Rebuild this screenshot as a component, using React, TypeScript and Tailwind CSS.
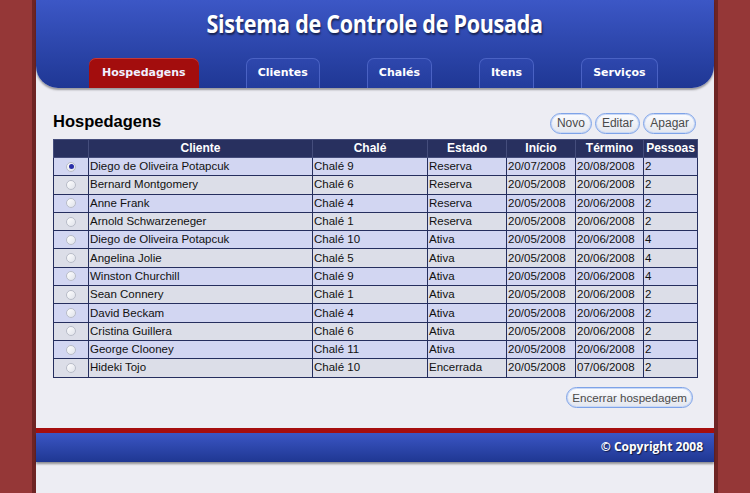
import React from "react";

const rows = [
  ["Diego de Oliveira Potapcuk", "Chalé 9", "Reserva", "20/07/2008", "20/08/2008", "2"],
  ["Bernard Montgomery", "Chalé 6", "Reserva", "20/05/2008", "20/06/2008", "2"],
  ["Anne Frank", "Chalé 4", "Reserva", "20/05/2008", "20/06/2008", "2"],
  ["Arnold Schwarzeneger", "Chalé 1", "Reserva", "20/05/2008", "20/06/2008", "2"],
  ["Diego de Oliveira Potapcuk", "Chalé 10", "Ativa", "20/05/2008", "20/06/2008", "4"],
  ["Angelina Jolie", "Chalé 5", "Ativa", "20/05/2008", "20/06/2008", "4"],
  ["Winston Churchill", "Chalé 9", "Ativa", "20/05/2008", "20/06/2008", "4"],
  ["Sean Connery", "Chalé 1", "Ativa", "20/05/2008", "20/06/2008", "2"],
  ["David Beckam", "Chalé 4", "Ativa", "20/05/2008", "20/06/2008", "2"],
  ["Cristina Guillera", "Chalé 6", "Ativa", "20/05/2008", "20/06/2008", "2"],
  ["George Clooney", "Chalé 11", "Ativa", "20/05/2008", "20/06/2008", "2"],
  ["Hideki Tojo", "Chalé 10", "Encerrada", "20/05/2008", "07/06/2008", "2"],
];

const tabs = ["Hospedagens", "Clientes", "Chalés", "Itens", "Serviços"];

function Btn({ children, small }: { children: React.ReactNode; small?: boolean }) {
  return (
    <button
      className={`box-border block h-[21px] rounded-full border border-[#7ea3e8] bg-gradient-to-b from-[#fbfcff] to-[#e3e6ee] leading-[19px] text-[#4a4a4a] shadow-[inset_0_0_0_1px_#c9d8f5] [font-family:'Liberation_Sans',Arial,sans-serif] ${
        small ? "px-[5px] text-[11.6px]" : "px-[6px] text-[12px]"
      }`}
    >
      {children}
    </button>
  );
}

function Radio({ checked }: { checked?: boolean }) {
  return (
    <span className="mx-auto flex h-[10px] w-[10px] items-center justify-center rounded-full border border-[#b8bcc8] bg-gradient-to-br from-[#ffffff] to-[#dfe2ea]">
      {checked && <span className="h-[5px] w-[5px] rounded-full bg-[#2a2ea8]" />}
    </span>
  );
}

export default function App() {
  return (
    <div className="flex h-[493px] w-[750px] justify-center overflow-hidden bg-[#953737]">
      <div className="flex w-[686px] justify-center bg-gradient-to-r from-[#6e2424] via-transparent to-[#6e2424]">
        <div className="flex w-[678px] flex-col bg-[#ededf3]">
          {/* Header */}
          <div className="relative rounded-b-[22px] shadow-[0_2px_2px_rgba(0,0,0,0.35)]">
            <div className="flex h-[88px] flex-col items-center rounded-b-[22px] bg-gradient-to-b from-[#3c57c6] to-[#1f3794]">
              <h1 className="mt-[6px] scale-x-[0.86] text-[25px] font-bold leading-[34px] tracking-[-0.3px] text-white [font-family:'Open_Sans',sans-serif] [text-shadow:1px_2px_2px_rgba(0,0,0,0.55)]">
                Sistema de Controle de Pousada
              </h1>
              <div className="mt-auto flex gap-[47px] self-start pl-[53px]">
                {tabs.map((t, i) => (
                  <div
                    key={t}
                    className={
                      i === 0
                        ? "flex h-[30px] items-center rounded-t-[7px] bg-[#a30d0d] px-[13px] text-[11px] font-bold text-[#f0f0ff] [font-family:'DejaVu_Sans',Verdana,sans-serif] shadow-[inset_0_1px_0_#c23a3a]"
                        : "flex h-[30px] items-center rounded-t-[7px] border border-b-0 border-[#4a62c4] bg-gradient-to-b from-[#2e47ad] to-[#233c9c] px-[11px] text-[11px] font-bold text-white [font-family:'DejaVu_Sans',Verdana,sans-serif]"
                    }
                  >
                    {t}
                  </div>
                ))}
              </div>
            </div>
          </div>

          {/* Content */}
          <div className="flex flex-col px-[17px] pt-[25px]">
            <div className="flex items-start justify-between">
              <h2 className="-mt-[1px] text-[16.5px] font-bold leading-[18px] text-black [font-family:'Liberation_Sans',Arial,sans-serif]">
                Hospedagens
              </h2>
              <div className="mr-[1px] flex gap-[3px]">
                <Btn>Novo</Btn>
                <Btn>Editar</Btn>
                <Btn>Apagar</Btn>
              </div>
            </div>
            <table className="mt-[5px] w-[644px] table-fixed border-collapse border border-[#252e5e] text-[11.5px] [font-family:'Liberation_Sans',Arial,sans-serif]">
              <colgroup>
                <col className="w-[35px]" />
                <col className="w-[224px]" />
                <col className="w-[115px]" />
                <col className="w-[79px]" />
                <col className="w-[69px]" />
                <col className="w-[68px]" />
                <col className="w-[54px]" />
              </colgroup>
              <thead>
                <tr className="h-[18px] bg-[#28305f] text-white">
                  <th className="border border-[#454d7c] p-0"></th>
                  {["Cliente", "Chalé", "Estado", "Início", "Término", "Pessoas"].map((h) => (
                    <th key={h} className="border border-[#454d7c] p-0 text-center text-[12px] font-bold leading-[17px]">
                      {h}
                    </th>
                  ))}
                </tr>
              </thead>
              <tbody>
                {rows.map((r, i) => (
                  <tr key={i} className={`h-[18.3px] ${i % 2 === 0 ? "bg-[#d2d6f2]" : "bg-[#dcdee8]"}`}>
                    <td className="border border-[#252e5e] p-0">
                      <Radio checked={i === 0} />
                    </td>
                    {r.map((c, j) => (
                      <td key={j} className="border border-[#252e5e] px-[1px] py-0 leading-[17px] text-[#111]">
                        {c}
                      </td>
                    ))}
                  </tr>
                ))}
              </tbody>
            </table>
            <div className="mt-[9px] flex justify-end pr-[4px]">
              <Btn small>Encerrar hospedagem</Btn>
            </div>
          </div>

          {/* Footer */}
          <div className="mt-[20px] h-[5px] bg-[#a50e0e]" />
          <div className="flex h-[29px] items-center justify-end bg-gradient-to-b from-[#3b56c5] to-[#1f3792] pr-[11px] shadow-[0_2px_2px_rgba(0,0,0,0.4)]">
            <span className="text-[12px] font-bold text-white [font-family:'Open_Sans',sans-serif] [text-shadow:1px_1px_1px_rgba(0,0,0,0.6)]">
              © Copyright 2008
            </span>
          </div>
        </div>
      </div>
    </div>
  );
}
